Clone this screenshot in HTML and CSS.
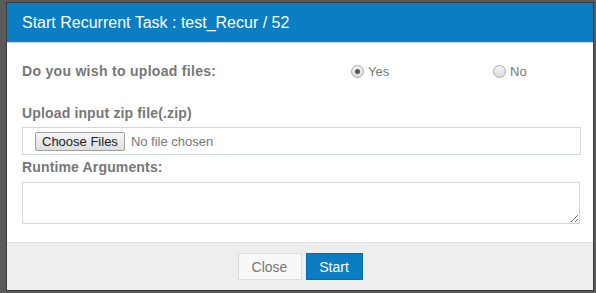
FILE: index.html
```html
<!DOCTYPE html>
<html>
<head>
<meta charset="utf-8">
<link rel="stylesheet" href="styles.css">
</head>
<body>
<div class="modal">
  <div class="modal-header">Start Recurrent Task : test_Recur / 52</div>
  <div class="modal-body">
    <div class="row-radio">
      <span class="label">Do you wish to upload files:</span>
      <span class="opt opt-yes"><span class="radio checked"></span>Yes</span>
      <span class="opt opt-no"><span class="radio"></span>No</span>
    </div>
    <div class="label label-upload">Upload input zip file(.zip)</div>
    <div class="file-box">
      <span class="file-btn">Choose Files</span>
      <span class="file-text">No file chosen</span>
    </div>
    <div class="label label-args">Runtime Arguments:</div>
    <textarea class="args"></textarea>
  </div>
  <div class="modal-footer">
    <button class="btn btn-close">Close</button>
    <button class="btn btn-start">Start</button>
  </div>
</div>
</body>
</html>
```

FILE: styles.css
```css
html, body {
  margin: 0;
  padding: 0;
}
body {
  background: #5a5a5a;
  width: 596px;
  height: 293px;
  overflow: hidden;
  font-family: "Liberation Sans", Arial, sans-serif;
  padding: 2px 0 0 6px;
  box-sizing: border-box;
}
.modal {
  width: 588px;
  height: 289px;
  box-sizing: border-box;
  border: 1px solid #3a3a3a;
  background: #fff;
  display: flex;
  flex-direction: column;
}
.modal-header {
  background: #0b7dc2;
  color: #fff;
  font-size: 16px;
  height: 39px;
  line-height: 39px;
  padding-left: 15px;
  border-bottom: 1px solid #c9dbe6;
  flex: none;
}
.modal-body {
  padding: 20px 12px 0 15px;
  flex: 1;
  display: flex;
  flex-direction: column;
}
.label {
  font-size: 14px;
  line-height: 16px;
  font-weight: bold;
  color: #777;
  letter-spacing: 0.15px;
}
.row-radio {
  display: flex;
  align-items: center;
  height: 16px;
}
.row-radio .label {
  width: 329px;
  letter-spacing: 0.3px;
}
.opt {
  display: flex;
  align-items: center;
  font-size: 13px;
  color: #777;
  padding-top: 1px;
}
.opt-yes {
  width: 142px;
}
.radio {
  width: 11px;
  height: 11px;
  border-radius: 50%;
  border: 1px solid #a9a9a9;
  background: linear-gradient(#f4f4f4, #dcdcdc);
  margin-right: 4px;
  position: relative;
  box-sizing: content-box;
}
.radio.checked::after {
  content: "";
  position: absolute;
  left: 3px;
  top: 3px;
  width: 5px;
  height: 5px;
  border-radius: 50%;
  background: #555;
}
.label-upload {
  margin-top: 26px;
}
.file-box {
  margin-top: 6px;
  height: 28px;
  border: 1px solid #cfd8de;
  box-sizing: border-box;
  display: flex;
  align-items: center;
  padding-left: 12px;
  font-size: 13px;
  flex: none;
}
.file-btn {
  height: 19px;
  box-sizing: border-box;
  padding: 0 6px;
  line-height: 17px;
  border: 1px solid #a0a0a0;
  border-radius: 2px;
  background: linear-gradient(#f6f6f6, #dedede);
  color: #222;
}
.file-text {
  margin-left: 6px;
  color: #777;
}
.label-args {
  margin-top: 4px;
}
.args {
  margin-top: 7px;
  width: 558px;
  height: 42px;
  box-sizing: border-box;
  border: 1px solid #cfd8de;
  resize: vertical;
  outline: none;
  flex: none;
}
.modal-footer {
  height: 48px;
  background: #eee;
  border-top: 1px solid #e2e2e2;
  display: flex;
  justify-content: center;
  align-items: center;
  gap: 4px;
  box-sizing: border-box;
  flex: none;
}
.btn {
  height: 27px;
  font-family: "Liberation Sans", Arial, sans-serif;
  font-size: 14px;
  padding: 0;
  border-radius: 0;
  cursor: pointer;
}
.btn-close {
  width: 64px;
  background: #f8f8f8;
  border: 1px solid #dcdcdc;
  color: #777;
}
.btn-start {
  width: 57px;
  background: #0b7dc2;
  border: 1px solid #0a6cab;
  color: #fff;
}
```
